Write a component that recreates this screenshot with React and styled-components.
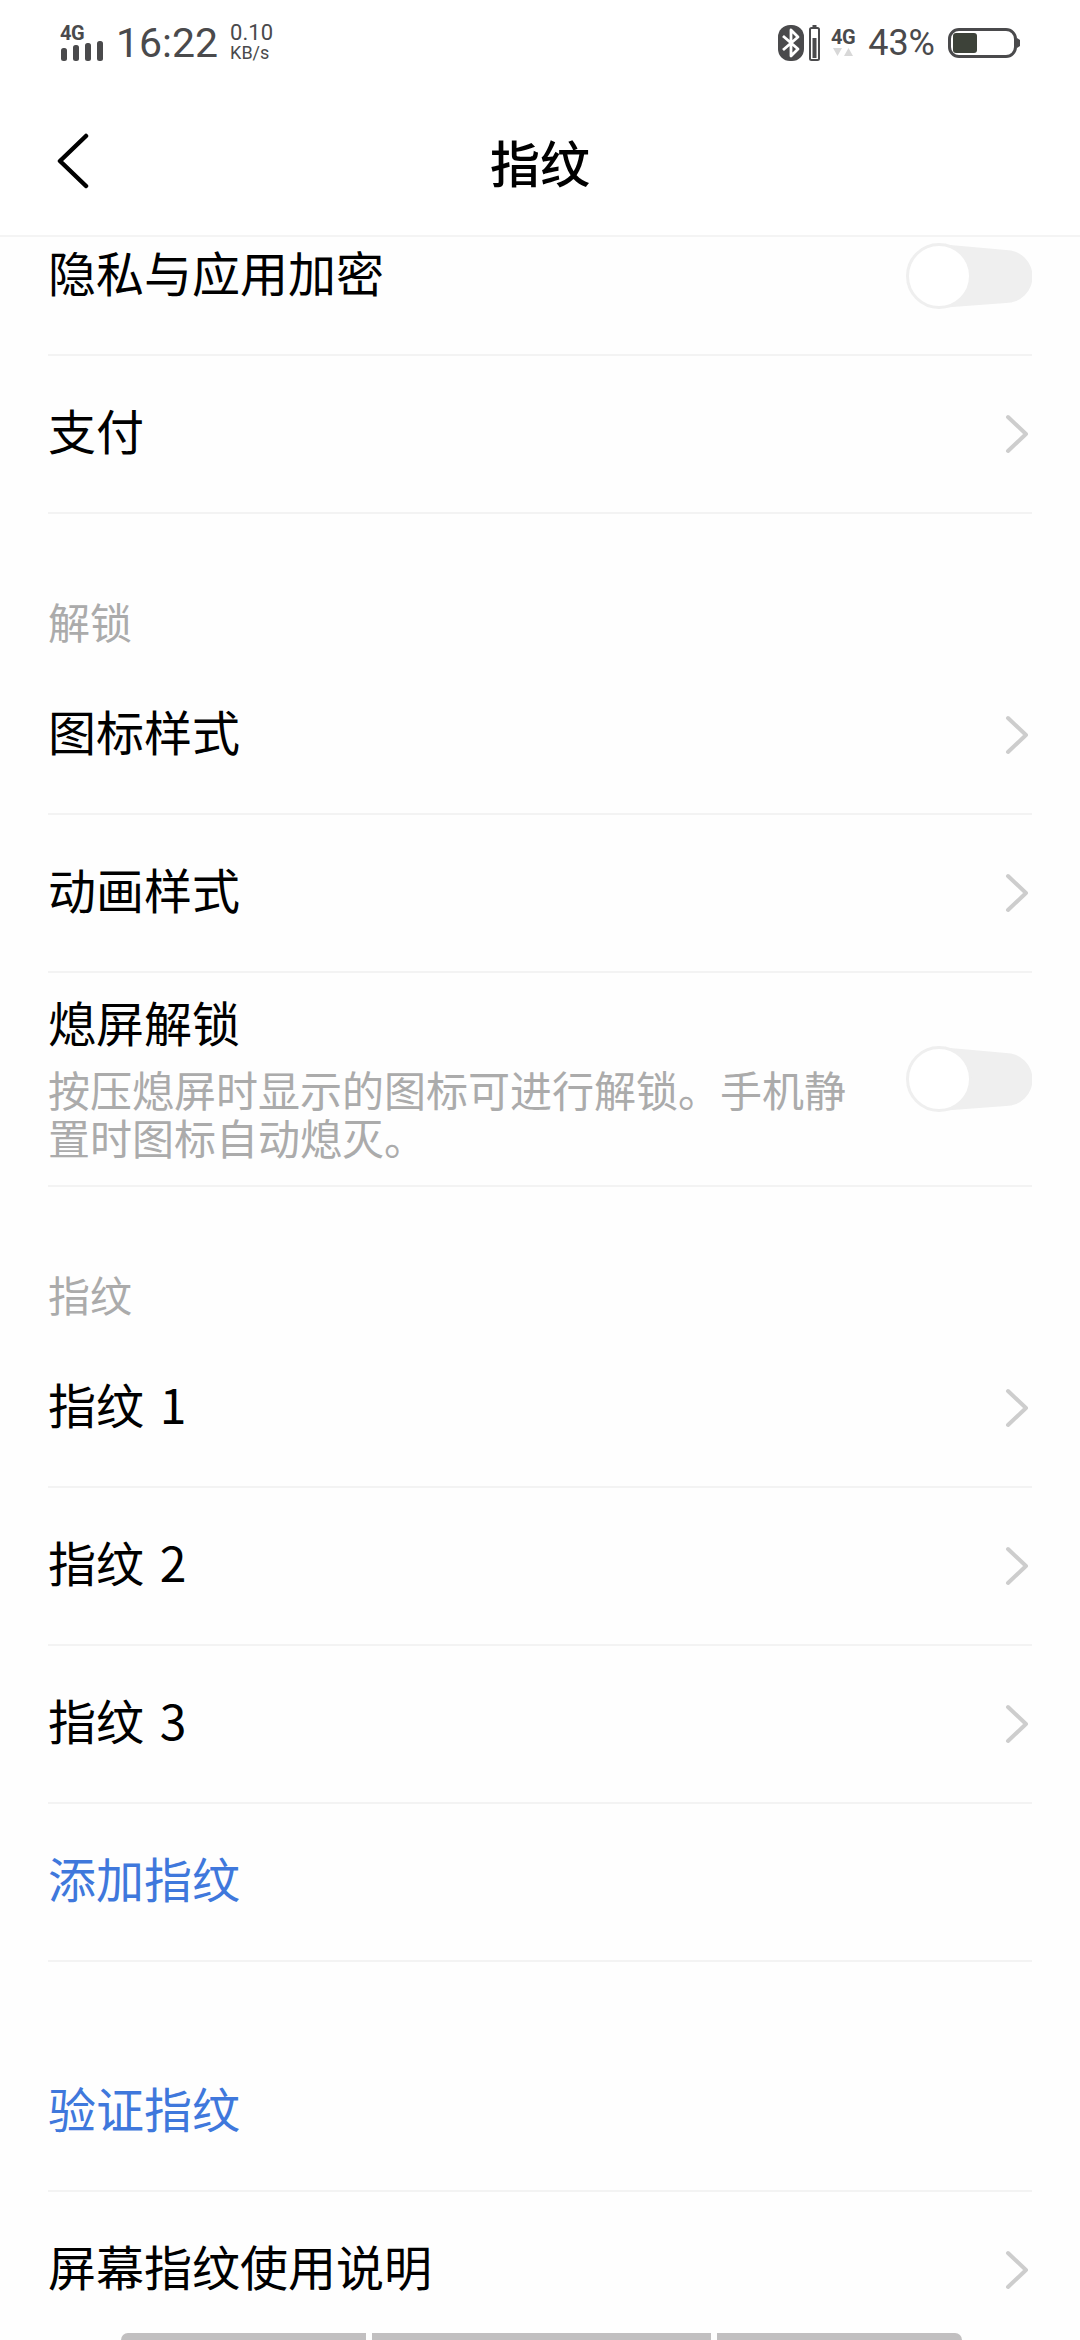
import React from 'react';
import styled, { createGlobalStyle } from 'styled-components';

const GlobalStyle = createGlobalStyle`
  html, body { margin: 0; padding: 0; background: #fff; }
  body { font-family: "Noto Sans CJK SC", "Noto Sans", sans-serif; }
`;

const Page = styled.div`
  position: relative;
  width: 1080px;
  height: 2340px;
  overflow: hidden;
  background: #fefefe;
`;

const Header = styled.header`
  position: relative;
  z-index: 2;
  height: 237px;
  background: #fff;
  border-bottom: 2px solid #f4f4f4;
  box-sizing: border-box;
`;

const StatusBar = styled.div`
  height: 86px;
  padding: 0 60px;
  display: flex;
  align-items: center;
  justify-content: space-between;
  box-sizing: border-box;
  color: #4a4a4c;
  font-family: Roboto, sans-serif;
`;

const StatusGroup = styled.div`
  display: flex;
  align-items: center;
`;

const Signal = styled.div`
  display: flex;
  flex-direction: column;
  width: 44px;
  margin-right: 12px;
`;

const TinyLabel = styled.span`
  font-size: 20px;
  font-weight: 700;
  line-height: 15px;
  letter-spacing: -0.5px;
`;

const Clock = styled.span`
  font-size: 41px;
  line-height: 44px;
  margin-right: 12px;
`;

const Speed = styled.div`
  display: flex;
  flex-direction: column;
  font-size: 22px;
  line-height: 20px;
  & span + span { font-size: 18px; }
`;

const Network = styled.div`
  display: flex;
  flex-direction: column;
  align-items: center;
  width: 24px;
  margin: 0 13px 0 11px;
`;

const Percent = styled.span`
  font-size: 36px;
  line-height: 40px;
  margin-right: 13px;
`;

const NavBar = styled.div`
  height: 148px;
  padding: 2px 0 0 56px;
  box-sizing: border-box;
  display: flex;
  align-items: center;
  position: relative;
`;

const Title = styled.h1`
  position: absolute;
  left: 0;
  right: 0;
  margin: 0;
  text-align: center;
  font-size: 50px;
  font-weight: 500;
  color: #000;
  pointer-events: none;
`;

const List = styled.main`
  margin-top: -39px;
  padding: 0 48px;
`;

const Row = styled.div`
  display: flex;
  align-items: center;
  justify-content: space-between;
  min-height: 158px;
  box-sizing: border-box;
  border-bottom: 2px solid #f3f3f3;
  margin-top: ${(p) => (p.$gap ? '72px' : 0)};
`;

const RowText = styled.div`
  max-width: 810px;
  padding: ${(p) => (p.$tall ? '18px 0 24px' : '0 0 10px')};
`;

const RowTitle = styled.div`
  font-size: 48px;
  line-height: 60px;
  word-spacing: 5px;
  color: ${(p) => (p.$link ? '#3f78dc' : '#000')};
`;

const RowSub = styled.div`
  margin-top: 14px;
  font-size: 42px;
  line-height: 48px;
  color: #ababab;
`;

const GroupLabel = styled.div`
  height: 143px;
  display: flex;
  align-items: flex-end;
  padding-bottom: 6px;
  box-sizing: border-box;
  font-size: 42px;
  line-height: 60px;
  color: #ababab;
`;

const GestureBar = styled.div`
  position: absolute;
  left: 121px;
  bottom: 0;
  display: flex;
  gap: 6px;
`;

const GestureSegment = styled.div`
  width: ${(p) => p.$w}px;
  height: 7px;
  background: #c1bfc0;
  border-radius: ${(p) => p.$radius};
`;

const Toggle = () => (
  <svg width="126" height="66" viewBox="0 0 126 66" fill="none">
    <path d="M33 1 L100 7 A26 26 0 0 1 100 60 L33 65 Z" fill="#efefef" />
    <circle cx="33" cy="33" r="31.5" fill="#fff" stroke="#efefef" strokeWidth="3" />
  </svg>
);

const Chevron = () => (
  <svg width="24" height="40" viewBox="0 0 24 40" fill="none" style={{ marginRight: 3 }}>
    <path d="M3 3 L21 20 L3 37" stroke="#cdcdcd" strokeWidth="4" strokeLinecap="round" strokeLinejoin="round" />
  </svg>
);

const BackArrow = () => (
  <svg width="34" height="56" viewBox="0 0 34 56" fill="none">
    <path d="M30 3 L4 28 L30 53" stroke="#000" strokeWidth="4.5" strokeLinecap="round" strokeLinejoin="round" />
  </svg>
);

const SignalBars = () => (
  <svg width="44" height="20" viewBox="0 0 44 20" fill="#4a4a4c">
    <rect x="1" y="7" width="6" height="13" rx="2.5" />
    <rect x="13" y="4" width="6" height="16" rx="2.5" />
    <rect x="25" y="2" width="6" height="18" rx="2.5" />
    <rect x="37" y="0" width="6" height="20" rx="2.5" />
  </svg>
);

const Bluetooth = () => (
  <svg width="26" height="36" viewBox="0 0 26 36" fill="none" style={{ marginRight: 5 }}>
    <rect x="0" y="0" width="26" height="36" rx="12" fill="#4a4a4c" />
    <path d="M5 11 L20 24 L13 31 V5 L20 12 L5 25" stroke="#fff" strokeWidth="2.8" strokeLinejoin="round" />
  </svg>
);

const SmallBattery = () => (
  <svg width="11" height="36" viewBox="0 0 11 36" fill="none">
    <rect x="3.5" y="0" width="4" height="3" fill="#4a4a4c" />
    <rect x="1" y="3" width="9" height="32" rx="1.5" stroke="#4a4a4c" strokeWidth="2" />
    <rect x="3.5" y="13" width="4" height="20" fill="#4a4a4c" />
  </svg>
);

const Arrows = () => (
  <svg width="20" height="8" viewBox="0 0 20 8" fill="#d8d8d8" style={{ marginTop: 3 }}>
    <path d="M0 0 H9 L4.5 8 Z" />
    <path d="M11 8 H20 L15.5 0 Z" />
  </svg>
);

const Battery = () => (
  <svg width="72" height="30" viewBox="0 0 72 30" fill="none">
    <rect x="1.5" y="1.5" width="66" height="27" rx="9.5" stroke="#4a4a4c" strokeWidth="3" />
    <rect x="5" y="5" width="24" height="20" rx="3" fill="#3d4239" />
    <path d="M69 10 L72 12 V18 L69 20 Z" fill="#4a4a4c" />
  </svg>
);

const rows = [
  { kind: 'row', title: '隐私与应用加密', toggle: true },
  { kind: 'row', title: '支付', chevron: true },
  { kind: 'label', title: '解锁' },
  { kind: 'row', title: '图标样式', chevron: true },
  { kind: 'row', title: '动画样式', chevron: true },
  {
    kind: 'row',
    title: '熄屏解锁',
    sub: '按压熄屏时显示的图标可进行解锁。手机静置时图标自动熄灭。',
    toggle: true,
  },
  { kind: 'label', title: '指纹' },
  { kind: 'row', title: '指纹 1', chevron: true },
  { kind: 'row', title: '指纹 2', chevron: true },
  { kind: 'row', title: '指纹 3', chevron: true },
  { kind: 'row', title: '添加指纹', link: true },
  { kind: 'row', title: '验证指纹', link: true, gap: true },
  { kind: 'row', title: '屏幕指纹使用说明', chevron: true },
];

export default function App() {
  return (
    <Page>
      <GlobalStyle />
      <Header>
        <StatusBar>
          <StatusGroup>
            <Signal>
              <TinyLabel>4G</TinyLabel>
              <SignalBars />
            </Signal>
            <Clock>16:22</Clock>
            <Speed>
              <span>0.10</span>
              <span>KB/s</span>
            </Speed>
          </StatusGroup>
          <StatusGroup>
            <Bluetooth />
            <SmallBattery />
            <Network>
              <TinyLabel>4G</TinyLabel>
              <Arrows />
            </Network>
            <Percent>43%</Percent>
            <Battery />
          </StatusGroup>
        </StatusBar>
        <NavBar>
          <BackArrow />
          <Title>指纹</Title>
        </NavBar>
      </Header>
      <List>
        {rows.map((row) =>
          row.kind === 'label' ? (
            <GroupLabel key={row.title}>{row.title}</GroupLabel>
          ) : (
            <Row key={row.title} $gap={row.gap}>
              <RowText $tall={!!row.sub}>
                <RowTitle $link={row.link}>{row.title}</RowTitle>
                {row.sub && <RowSub>{row.sub}</RowSub>}
              </RowText>
              {row.toggle && <Toggle />}
              {row.chevron && <Chevron />}
            </Row>
          )
        )}
      </List>
      <GestureBar>
        <GestureSegment $w={245} $radius="8px 0 0 0" />
        <GestureSegment $w={339} $radius="0" />
        <GestureSegment $w={245} $radius="0 8px 0 0" />
      </GestureBar>
    </Page>
  );
}
